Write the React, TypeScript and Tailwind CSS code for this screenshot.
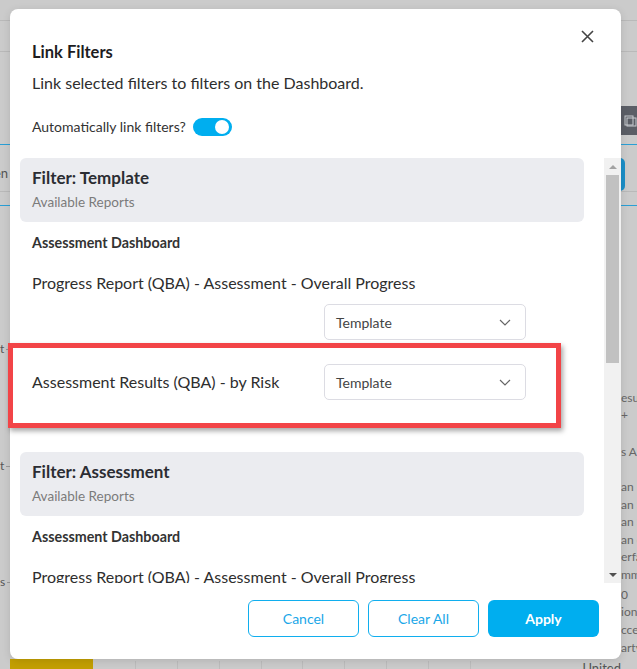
import React from "react";

function Chevron() {
  return (
    <svg width="12" height="7" viewBox="0 0 12 7" fill="none" className="text-[#666]">
      <path d="M1 1l5 5 5-5" stroke="currentColor" strokeWidth="1.2" />
    </svg>
  );
}

function Select() {
  return (
    <div className="flex h-[36px] w-[202px] items-center justify-between rounded-[5px] border border-[#dcdce3] bg-white pl-[11px] pr-[14px] text-[14px] text-[#444]">
      <span>Template</span>
      <Chevron />
    </div>
  );
}

function FilterCard({ title }: { title: string }) {
  return (
    <div className="rounded-[6px] bg-[#ebecf0] px-3 pb-[12px] pt-[10px]">
      <div className="text-[17px] font-bold leading-5 text-[#2b2d33]">{title}</div>
      <div className="mt-[6px] text-[13.5px] leading-4 text-[#7b7b7b]">Available Reports</div>
    </div>
  );
}

export default function App() {
  const rightBits = [
    [398, "esul"],
    [415, "+"],
    [452, "s A"],
    [487, "an 1"],
    [505, "an S"],
    [522, "an S"],
    [540, "an c"],
    [557, "erfa"],
    [575, "mm"],
    [595, "0"],
    [612, "ion"],
    [630, "cce"],
    [648, "arty"],
  ] as const;

  return (
    <div className="relative h-[669px] w-[637px] overflow-hidden bg-[#cbcbcb] font-[Lato,sans-serif]">
      {/* page behind the overlay */}
      <div className="absolute left-0 right-0 top-[20px] h-px bg-[#b9b9b9]" />
      <div className="absolute left-0 right-0 top-[51px] h-px bg-[#b9b9b9]" />
      <div className="absolute left-0 right-0 top-[144px] h-px bg-[#2a9fd6]" />
      <div className="absolute left-0 right-0 top-[191px] h-px bg-[#b9b9b9]" />
      <div className="absolute left-0 right-0 top-[205px] h-px bg-[#2a9fd6]" />
      <div className="absolute left-0 top-[165px] w-[10px] overflow-hidden text-[13px] leading-4 text-[#555]">
        <span className="-ml-[6px] block">en</span>
      </div>
      <div className="absolute left-[621px] top-[106px] flex h-[29px] w-[20px] items-center bg-[#5b5e66] pl-[2px]">
        <svg width="14" height="14" viewBox="0 0 14 14" fill="none" stroke="#c9cbd0" strokeWidth="1">
          <rect x="2" y="2" width="8" height="9" />
          <rect x="4" y="4" width="9" height="8" />
        </svg>
      </div>
      <div className="absolute left-[614px] top-[158px] h-[33px] w-[11px] rounded-r-[5px] bg-[#1a8fc8]" />
      {[350, 467, 583].map((y, i) => (
        <div key={y} className="absolute left-[0px] flex items-center gap-[2px] text-[12px] leading-4 text-[#555]" style={{ top: y - 9 }}>
          <span>{i === 2 ? "s" : "t"}</span>
          <span className="h-px w-[4px] bg-[#999]" />
        </div>
      ))}
      <div className="absolute left-[621px] top-0 h-[669px] w-[16px] overflow-hidden">
        {rightBits.map(([y, t]) => (
          <div key={y} className="absolute left-0 whitespace-nowrap text-[12px] leading-[14px] text-[#666]" style={{ top: y - 7 }}>
            {t}
          </div>
        ))}
      </div>
      <div className="absolute bottom-0 left-[10px] h-[10px] w-[83px] bg-[#c39f02]" />
      {[135, 177, 219, 261, 302, 344, 386, 428, 470].map((x) => (
        <div key={x} className="absolute bottom-0 h-[8px] w-px bg-[#bdbdbd]" style={{ left: x }} />
      ))}
      <div className="absolute left-[569px] top-[660px] flex items-center gap-[5px] text-[13px] leading-4 text-[#555]">
        <span className="h-[10px] w-[10px] rounded-full bg-[#2a9d94]" />
        <span>United Stat</span>
      </div>

      {/* modal */}
      <div className="absolute left-[10px] top-[9px] flex h-[650px] w-[611px] flex-col rounded-[8px] bg-white shadow-[0_2px_8px_rgba(0,0,0,0.12)]">
        <div className="relative px-[22px] pt-[33px]">
          <div className="text-[16.5px] font-bold leading-5 text-[#1d1d1f]">Link Filters</div>
          <div className="mt-[11px] text-[16px] leading-5 text-[#2e2e2e]">Link selected filters to filters on the Dashboard.</div>
          <div className="mt-[25px] flex items-center gap-[7px]">
            <span className="text-[14px] leading-[18px] text-[#333]">Automatically link filters?</span>
            <span className="flex h-[18px] w-[39px] items-center justify-end rounded-full bg-[#00aeef] pr-[3px]">
              <span className="h-[14px] w-[14px] rounded-full bg-white" />
            </span>
          </div>
          <button className="absolute right-[27px] top-[21px] text-[#444]">
            <svg width="13" height="13" viewBox="0 0 13 13" stroke="currentColor" strokeWidth="1.6">
              <path d="M1 1l11 11M12 1L1 12" />
            </svg>
          </button>
        </div>

        <div className="mt-[22px] flex h-[425px] pl-[10px]">
          <div className="flex-1 overflow-hidden pr-[20px] text-[#2e2e2e]">
            <FilterCard title="Filter: Template" />
            <div className="mt-[11px] px-3 text-[14.3px] font-bold leading-5 text-[#333]">Assessment Dashboard</div>
            <div className="mt-[20px] px-3 text-[16px] leading-5">Progress Report (QBA) - Assessment - Overall Progress</div>
            <div className="mt-[11px] pl-[304px]">
              <Select />
            </div>
            <div className="mt-[24px] flex items-center px-3">
              <div className="w-[292px] text-[16px] leading-5">Assessment Results (QBA) - by Risk</div>
              <Select />
            </div>
            <div className="mt-[52px]">
              <FilterCard title="Filter: Assessment" />
            </div>
            <div className="mt-[11px] px-3 text-[14.3px] font-bold leading-5 text-[#333]">Assessment Dashboard</div>
            <div className="mt-[20px] px-3 text-[16px] leading-5">Progress Report (QBA) - Assessment - Overall Progress</div>
          </div>
          <div className="flex w-[17px] flex-col items-center bg-[#f1f1f1]">
            <div className="flex h-[17px] items-center">
              <span className="h-0 w-0 border-x-[4px] border-b-[4px] border-x-transparent border-b-[#a3a3a3]" />
            </div>
            <div className="h-[188px] w-[13px] bg-[#c1c1c1]" />
            <div className="flex-1" />
            <div className="flex h-[17px] items-center">
              <span className="h-0 w-0 border-x-[4px] border-t-[4px] border-x-transparent border-t-[#505050]" />
            </div>
          </div>
        </div>

        <div className="mt-[17px] flex justify-end gap-[9px] pr-[22px]">
          <button className="h-[37px] w-[111px] rounded-[6px] border border-[#10aeee] text-[14px] text-[#1aa7e8]">Cancel</button>
          <button className="h-[37px] w-[111px] rounded-[6px] border border-[#10aeee] text-[14px] text-[#1aa7e8]">Clear All</button>
          <button className="h-[37px] w-[111px] rounded-[6px] bg-[#00aeef] text-[14px] font-bold text-white">Apply</button>
        </div>
      </div>

      {/* annotation box */}
      <div className="absolute left-[8px] top-[343px] h-[85px] w-[553px] border-[5px] border-[#f24447] shadow-[2px_3px_5px_rgba(0,0,0,0.35)]" />
    </div>
  );
}
